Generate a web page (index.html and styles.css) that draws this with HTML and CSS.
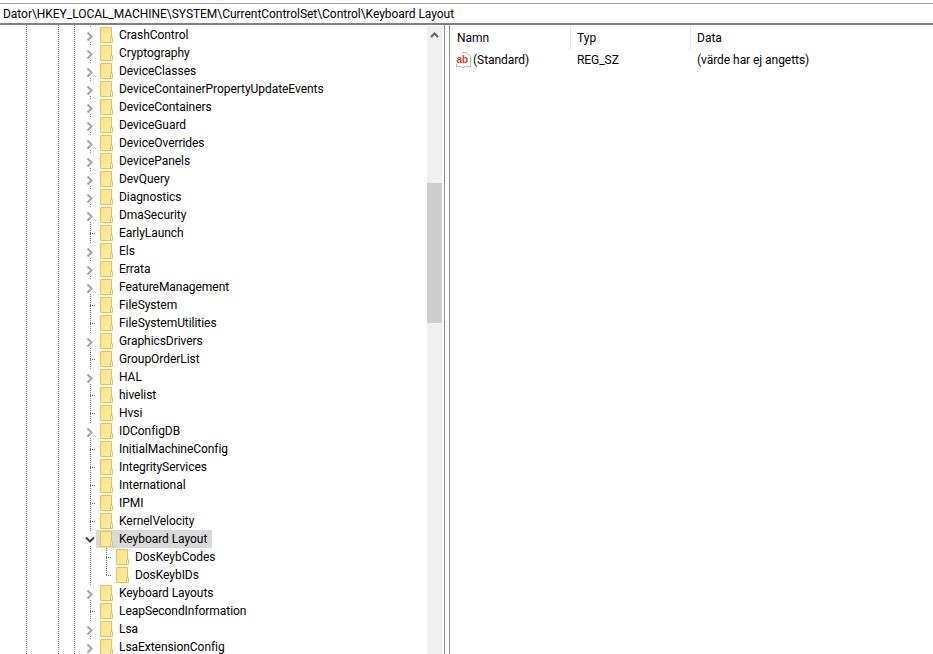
FILE: index.html
```html
<!DOCTYPE html>
<html lang="sv">
<head>
  <meta charset="UTF-8">
  <title>Registereditorn</title>
  <link rel="stylesheet" href="styles.css">
</head>
<body>
  <svg class="defs">
    <defs>
      <linearGradient id="folderFill" x1="0" y1="0" x2="1" y2="1">
        <stop offset="0" stop-color="#ffe083"/>
        <stop offset="1" stop-color="#ffeeb0"/>
      </linearGradient>
    </defs>
    <symbol id="folder" viewBox="0 0 14 16">
      <path d="M0.5 0.5 H11.5 V15.5 H0.5 Z" fill="url(#folderFill)" stroke="#eac14f"/>
      <path d="M10.5 10.5 H12.5 V15.5 H10.5 Z" fill="#fff6d2" stroke="#eac14f"/>
    </symbol>
    <symbol id="chevRight" viewBox="0 0 14 14">
      <path d="M5.5 4.5 L9.5 8.5 L5.5 12.5" fill="none" stroke="#a6a6a6" stroke-width="2.2"/>
    </symbol>
    <symbol id="chevDown" viewBox="0 0 14 14">
      <path d="M4 5.5 L8 9.5 L12 5.5" fill="none" stroke="#404040" stroke-width="2"/>
    </symbol>
  </svg>

  <div class="address">Dator\HKEY_LOCAL_MACHINE\SYSTEM\CurrentControlSet\Control\Keyboard Layout</div>

  <div class="main">
    <div class="tree-pane">
      <div class="tree">
        <div class="row"><span class="slot guide-v"><svg class="chev"><use href="#chevRight"/></svg></span><span class="item"><svg class="folder"><use href="#folder"/></svg>CrashControl</span></div>
        <div class="row"><span class="slot guide-v"><svg class="chev"><use href="#chevRight"/></svg></span><span class="item"><svg class="folder"><use href="#folder"/></svg>Cryptography</span></div>
        <div class="row"><span class="slot guide-v"><svg class="chev"><use href="#chevRight"/></svg></span><span class="item"><svg class="folder"><use href="#folder"/></svg>DeviceClasses</span></div>
        <div class="row"><span class="slot guide-v"><svg class="chev"><use href="#chevRight"/></svg></span><span class="item"><svg class="folder"><use href="#folder"/></svg>DeviceContainerPropertyUpdateEvents</span></div>
        <div class="row"><span class="slot guide-v"><svg class="chev"><use href="#chevRight"/></svg></span><span class="item"><svg class="folder"><use href="#folder"/></svg>DeviceContainers</span></div>
        <div class="row"><span class="slot guide-v"><svg class="chev"><use href="#chevRight"/></svg></span><span class="item"><svg class="folder"><use href="#folder"/></svg>DeviceGuard</span></div>
        <div class="row"><span class="slot guide-v"><svg class="chev"><use href="#chevRight"/></svg></span><span class="item"><svg class="folder"><use href="#folder"/></svg>DeviceOverrides</span></div>
        <div class="row"><span class="slot guide-v"><svg class="chev"><use href="#chevRight"/></svg></span><span class="item"><svg class="folder"><use href="#folder"/></svg>DevicePanels</span></div>
        <div class="row"><span class="slot guide-v"><svg class="chev"><use href="#chevRight"/></svg></span><span class="item"><svg class="folder"><use href="#folder"/></svg>DevQuery</span></div>
        <div class="row"><span class="slot guide-v"><svg class="chev"><use href="#chevRight"/></svg></span><span class="item"><svg class="folder"><use href="#folder"/></svg>Diagnostics</span></div>
        <div class="row"><span class="slot guide-v"><svg class="chev"><use href="#chevRight"/></svg></span><span class="item"><svg class="folder"><use href="#folder"/></svg>DmaSecurity</span></div>
        <div class="row"><span class="slot guide-t"></span><span class="item"><svg class="folder"><use href="#folder"/></svg>EarlyLaunch</span></div>
        <div class="row"><span class="slot guide-v"><svg class="chev"><use href="#chevRight"/></svg></span><span class="item"><svg class="folder"><use href="#folder"/></svg>Els</span></div>
        <div class="row"><span class="slot guide-v"><svg class="chev"><use href="#chevRight"/></svg></span><span class="item"><svg class="folder"><use href="#folder"/></svg>Errata</span></div>
        <div class="row"><span class="slot guide-v"><svg class="chev"><use href="#chevRight"/></svg></span><span class="item"><svg class="folder"><use href="#folder"/></svg>FeatureManagement</span></div>
        <div class="row"><span class="slot guide-t"></span><span class="item"><svg class="folder"><use href="#folder"/></svg>FileSystem</span></div>
        <div class="row"><span class="slot guide-t"></span><span class="item"><svg class="folder"><use href="#folder"/></svg>FileSystemUtilities</span></div>
        <div class="row"><span class="slot guide-v"><svg class="chev"><use href="#chevRight"/></svg></span><span class="item"><svg class="folder"><use href="#folder"/></svg>GraphicsDrivers</span></div>
        <div class="row"><span class="slot guide-t"></span><span class="item"><svg class="folder"><use href="#folder"/></svg>GroupOrderList</span></div>
        <div class="row"><span class="slot guide-v"><svg class="chev"><use href="#chevRight"/></svg></span><span class="item"><svg class="folder"><use href="#folder"/></svg>HAL</span></div>
        <div class="row"><span class="slot guide-t"></span><span class="item"><svg class="folder"><use href="#folder"/></svg>hivelist</span></div>
        <div class="row"><span class="slot guide-t"></span><span class="item"><svg class="folder"><use href="#folder"/></svg>Hvsi</span></div>
        <div class="row"><span class="slot guide-v"><svg class="chev"><use href="#chevRight"/></svg></span><span class="item"><svg class="folder"><use href="#folder"/></svg>IDConfigDB</span></div>
        <div class="row"><span class="slot guide-t"></span><span class="item"><svg class="folder"><use href="#folder"/></svg>InitialMachineConfig</span></div>
        <div class="row"><span class="slot guide-t"></span><span class="item"><svg class="folder"><use href="#folder"/></svg>IntegrityServices</span></div>
        <div class="row"><span class="slot guide-t"></span><span class="item"><svg class="folder"><use href="#folder"/></svg>International</span></div>
        <div class="row"><span class="slot guide-t"></span><span class="item"><svg class="folder"><use href="#folder"/></svg>IPMI</span></div>
        <div class="row"><span class="slot guide-t"></span><span class="item"><svg class="folder"><use href="#folder"/></svg>KernelVelocity</span></div>
        <div class="row"><span class="slot guide-v"><svg class="chev"><use href="#chevDown"/></svg></span><span class="item selected"><svg class="folder"><use href="#folder"/></svg>Keyboard Layout</span></div>
        <div class="row"><span class="slot guide-v"></span><span class="slot2 guide-t2"></span><span class="item"><svg class="folder"><use href="#folder"/></svg>DosKeybCodes</span></div>
        <div class="row"><span class="slot guide-v"></span><span class="slot2 guide-l2"></span><span class="item"><svg class="folder"><use href="#folder"/></svg>DosKeybIDs</span></div>
        <div class="row"><span class="slot guide-v"><svg class="chev"><use href="#chevRight"/></svg></span><span class="item"><svg class="folder"><use href="#folder"/></svg>Keyboard Layouts</span></div>
        <div class="row"><span class="slot guide-t"></span><span class="item"><svg class="folder"><use href="#folder"/></svg>LeapSecondInformation</span></div>
        <div class="row"><span class="slot guide-v"><svg class="chev"><use href="#chevRight"/></svg></span><span class="item"><svg class="folder"><use href="#folder"/></svg>Lsa</span></div>
        <div class="row"><span class="slot guide-v"><svg class="chev"><use href="#chevRight"/></svg></span><span class="item"><svg class="folder"><use href="#folder"/></svg>LsaExtensionConfig</span></div>
      </div>
      <div class="scrollbar">
        <div class="arrow-box">
          <svg width="9" height="6" viewBox="0 0 9 6"><path d="M1 5 L4.5 1.5 L8 5" fill="none" stroke="#606060" stroke-width="2"/></svg>
        </div>
        <div class="thumb"></div>
      </div>
    </div>
    <div class="splitter"></div>
    <div class="list-pane">
      <div class="list-head">
        <div class="col col-name">Namn</div>
        <div class="col col-type">Typ</div>
        <div class="col col-data">Data</div>
      </div>
      <div class="list-row">
        <div class="col col-name">
          <svg class="ab-icon" width="16" height="16" viewBox="0 0 16 16">
            <path d="M7 0.5 H11 L15.5 4.5 V15 L12 14 L8 15.5 L4 14 L1.5 15 V12" fill="none" stroke="#b4b4b4"/>
            <text x="1.5" y="11" class="ab-text">ab</text>
          </svg>
          <span>(Standard)</span>
        </div>
        <div class="col col-type">REG_SZ</div>
        <div class="col col-data">(värde har ej angetts)</div>
      </div>
    </div>
  </div>
</body>
</html>
```

FILE: styles.css
```css
html, body {
  margin: 0;
  padding: 0;
  height: 100%;
  overflow: hidden;
}
body {
  font-family: Roboto, "Noto Sans", sans-serif;
  font-size: 12px;
  color: #000;
  background-color: #fff;
  display: flex;
  flex-direction: column;
}
.defs {
  position: absolute;
  width: 0;
  height: 0;
}
.address {
  height: 19px;
  line-height: 20px;
  margin-top: 3px;
  padding-left: 3px;
  border-top: 1px solid #a0a0a0;
  border-bottom: 2px solid #808080;
  letter-spacing: -0.04px;
  white-space: nowrap;
}
.main {
  flex: 1;
  display: flex;
  min-height: 0;
  overflow: hidden;
}
.tree-pane {
  width: 444px;
  display: flex;
  flex: none;
  padding-right: 2px;
  box-sizing: border-box;
}
.tree {
  width: 427px;
  flex: none;
  padding-top: 1px;
  box-sizing: border-box;
  overflow: hidden;
  background:
    repeating-linear-gradient(#777 0 1px, transparent 1px 2px) 26px 0 / 1px 100% no-repeat,
    repeating-linear-gradient(#777 0 1px, transparent 1px 2px) 58px 0 / 1px 100% no-repeat,
    repeating-linear-gradient(#777 0 1px, transparent 1px 2px) 74px 0 / 1px 100% no-repeat;
}
.row {
  height: 18px;
  display: flex;
  padding-left: 82px;
}
.slot {
  width: 14px;
  height: 18px;
  flex: none;
}
.slot2 {
  width: 16px;
  height: 18px;
  flex: none;
}
.chev {
  display: block;
  width: 14px;
  height: 14px;
  margin-top: 2px;
  background-color: #fff;
}
.guide-v {
  background: repeating-linear-gradient(#777 0 1px, transparent 1px 2px) 8px 0 / 1px 100% no-repeat;
}
.guide-t {
  background:
    repeating-linear-gradient(#777 0 1px, transparent 1px 2px) 8px 0 / 1px 100% no-repeat,
    repeating-linear-gradient(90deg, #777 0 1px, transparent 1px 2px) 8px 9px / 6px 1px no-repeat;
}
.guide-t2 {
  background:
    repeating-linear-gradient(#777 0 1px, transparent 1px 2px) 10px 0 / 1px 100% no-repeat,
    repeating-linear-gradient(90deg, #777 0 1px, transparent 1px 2px) 10px 9px / 6px 1px no-repeat;
}
.guide-l2 {
  background:
    repeating-linear-gradient(#777 0 1px, transparent 1px 2px) 10px 0 / 1px 10px no-repeat,
    repeating-linear-gradient(90deg, #777 0 1px, transparent 1px 2px) 10px 9px / 6px 1px no-repeat;
}
.item {
  display: flex;
  align-items: center;
  height: 18px;
  padding: 0 3px 0 4px;
  line-height: 18px;
  letter-spacing: -0.05px;
  white-space: nowrap;
}
.selected {
  padding-right: 5px;
  background-color: #d9d9d9;
}
.folder {
  display: block;
  flex: none;
  width: 14px;
  height: 16px;
  margin-right: 5px;
}
.scrollbar {
  width: 15px;
  flex: none;
  margin-top: 1px;
  background-color: #f0f0f0;
}
.arrow-box {
  height: 17px;
  display: flex;
  align-items: center;
  justify-content: center;
}
.thumb {
  height: 140px;
  margin-top: 140px;
  background-color: #cdcdcd;
}
.splitter {
  width: 4px;
  flex: none;
  border-left: 1px solid #8c9099;
  border-right: 1px solid #8c9099;
}
.list-pane {
  flex: 1;
  min-width: 0;
}
.list-head {
  display: flex;
  height: 25px;
  padding-top: 1px;
  box-sizing: border-box;
  line-height: 25px;
}
.list-head .col {
  border-right: 1px solid #e5e5e5;
  height: 24px;
}
.list-head .col-data {
  border-right: 0;
}
.col {
  padding-left: 6px;
  box-sizing: border-box;
  white-space: nowrap;
}
.list-head .col-name {
  padding-left: 7px;
}
.col-name {
  width: 121px;
}
.col-type {
  width: 120px;
}
.list-row {
  display: flex;
  height: 20px;
  line-height: 20px;
  letter-spacing: -0.05px;
}
.list-row .col-name {
  display: flex;
  align-items: center;
  gap: 2px;
  padding-left: 5px;
}
.ab-icon {
  flex: none;
}
.ab-text {
  font-family: "Liberation Sans", sans-serif;
  font-size: 10px;
  font-weight: bold;
  fill: #d8401c;
}
```
